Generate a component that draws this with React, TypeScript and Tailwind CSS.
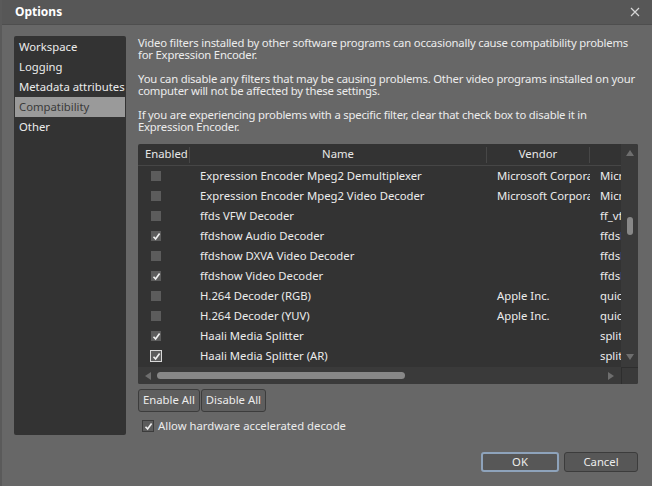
import { useState } from "react";

interface Filter {
  on: boolean;
  name: string;
  vendor: string;
  file: string;
  focus?: boolean;
}

const filters: Filter[] = [
  { on: false, name: "Expression Encoder Mpeg2 Demultiplexer", vendor: "Microsoft Corporation", file: "Microsoft.Expression" },
  { on: false, name: "Expression Encoder Mpeg2 Video Decoder", vendor: "Microsoft Corporation", file: "Microsoft.Expression" },
  { on: false, name: "ffds VFW Decoder", vendor: "", file: "ff_vfw.dll" },
  { on: true, name: "ffdshow Audio Decoder", vendor: "", file: "ffdshow.ax" },
  { on: false, name: "ffdshow DXVA Video Decoder", vendor: "", file: "ffdshow.ax" },
  { on: true, name: "ffdshow Video Decoder", vendor: "", file: "ffdshow.ax" },
  { on: false, name: "H.264 Decoder (RGB)", vendor: "Apple Inc.", file: "quicktime.qts" },
  { on: false, name: "H.264 Decoder (YUV)", vendor: "Apple Inc.", file: "quicktime.qts" },
  { on: true, name: "Haali Media Splitter", vendor: "", file: "splitter.ax" },
  { on: true, name: "Haali Media Splitter (AR)", vendor: "", file: "splitter.ax", focus: true },
];

const sections = ["Workspace", "Logging", "Metadata attributes", "Compatibility", "Other"];

function Check({ on, focus }: { on: boolean; focus?: boolean }) {
  return (
    <span
      className={
        focus
          ? "w-[12px] h-[12px] -ml-[1px] border border-[#d8d8d8] bg-[#5c5c5c] flex items-center justify-center"
          : "w-[10px] h-[10px] bg-[#5c5c5c] flex items-center justify-center"
      }
    >
      {on && (
        <svg width="9" height="9" viewBox="0 0 9 9" className="shrink-0">
          <path d="M1.5 4.8 L3.6 7 L7.6 1.5" fill="none" stroke="#f0f0f0" strokeWidth="1.6" />
        </svg>
      )}
    </span>
  );
}

function Arrow({ dir }: { dir: "up" | "down" | "left" | "right" }) {
  const d = {
    up: "M1 8 L5 2 L9 8 Z",
    down: "M1 2 L5 8 L9 2 Z",
    left: "M8 1 L2 5 L8 9 Z",
    right: "M2 1 L8 5 L2 9 Z",
  }[dir];
  return (
    <svg width="10" height="10" viewBox="0 0 10 10" className="shrink-0">
      <path d={d} fill="#6e6e6e" />
    </svg>
  );
}

export default function App() {
  const [section, setSection] = useState("Compatibility");

  return (
    <div
      className="w-[652px] h-[486px] bg-[#676767] text-[#ececec] text-[11.3px] flex flex-col overflow-hidden border-l-2 border-[#5a5a5a]"
      style={{ fontFamily: '"Noto Sans", "Open Sans", sans-serif' }}
    >
      <div className="h-[25px] shrink-0 bg-[#575757] border-b border-[#4e4e4e] flex items-center justify-between pl-[13px] pr-[12px]">
        <span className="font-bold text-[12px] text-white">Options</span>
        <svg width="10" height="10" viewBox="0 0 10 10">
          <path d="M1 1 L9 9 M9 1 L1 9" stroke="#d6d6d6" strokeWidth="1.2" />
        </svg>
      </div>

      <div className="flex flex-1 min-h-0 pl-[12px] pr-[14px] pt-[11px]">
        <ul className="w-[112px] h-[399px] bg-[#333333] rounded-[2px] pt-[1px] shrink-0">
          {sections.map((s) => (
            <li
              key={s}
              onClick={() => setSection(s)}
              className={
                "h-[20px] flex items-center pl-[4px] mx-[1px] cursor-default whitespace-nowrap " +
                (s === section ? "bg-[#9a9a9a] text-[#3a3a3a]" : "")
              }
            >
              {s}
            </li>
          ))}
        </ul>

        <div className="flex-1 min-w-0 ml-[12px] flex flex-col">
          <div className="leading-[12px] space-y-[12px] pt-[1px] whitespace-nowrap tracking-[-0.2px]">
            <p>
              Video filters installed by other software programs can occasionally cause compatibility problems
              <br />
              for Expression Encoder.
            </p>
            <p>
              You can disable any filters that may be causing problems. Other video programs installed on your
              <br />
              computer will not be affected by these settings.
            </p>
            <p>
              If you are experiencing problems with a specific filter, clear that check box to disable it in
              <br />
              Expression Encoder.
            </p>
          </div>

          <div className="mt-[11px] h-[240px] shrink-0 bg-[#333333] rounded-[2px] flex flex-col overflow-hidden">
            <div className="flex flex-1 min-h-0">
              <div className="flex-1 min-w-0 overflow-hidden">
                <div className="h-[22px] flex items-center border-b border-[#464646] text-[#e8e8e8]">
                  <div className="w-[52px] shrink-0 pl-[7px] h-[16px] flex items-center border-r border-[#474747]">
                    Enabled
                  </div>
                  <div className="w-[297px] shrink-0 h-[16px] flex items-center justify-center border-r border-[#474747]">
                    Name
                  </div>
                  <div className="w-[103px] shrink-0 h-[16px] flex items-center justify-center border-r border-[#474747]">
                    Vendor
                  </div>
                  <div className="flex-1" />
                </div>
                {filters.map((f) => (
                  <div key={f.name} className="h-[20px] flex items-center whitespace-nowrap">
                    <div className="w-[52px] shrink-0 flex items-center pl-[13px]">
                      <Check on={f.on} focus={f.focus} />
                    </div>
                    <div className="w-[297px] shrink-0 pl-[10px] overflow-hidden">{f.name}</div>
                    <div className="w-[103px] shrink-0 pl-[10px] overflow-hidden">{f.vendor}</div>
                    <div className="flex-1 min-w-0 pl-[10px] overflow-hidden">{f.file}</div>
                  </div>
                ))}
              </div>
              <div className="w-[17px] shrink-0 bg-[#3a3a3a] flex flex-col items-center pt-[4px] pb-[5px]">
                <Arrow dir="up" />
                <div className="flex-1 w-full flex flex-col items-center pt-[59px]">
                  <div className="w-[6px] h-[18px] rounded-full bg-[#888888]" />
                </div>
                <Arrow dir="down" />
              </div>
            </div>
            <div className="h-[17px] shrink-0 flex">
              <div className="flex-1 min-w-0 bg-[#3a3a3a] flex items-center pl-[5px] pr-[5px]">
                <Arrow dir="left" />
                <div className="ml-[4px] w-[248px] h-[7px] rounded-full bg-[#888888]" />
                <div className="flex-1" />
                <Arrow dir="right" />
              </div>
              <div className="w-[17px] shrink-0 bg-[#3a3a3a] border-l border-t border-[#2e2e2e]" />
            </div>
          </div>

          <div className="mt-[5px] flex">
            <button className="h-[23px] px-[4px] border border-[#3c3c3c] rounded-[3px] bg-[#5e5e5e] text-[#ececec]">
              Enable All
            </button>
            <button className="h-[23px] px-[4px] border border-[#3c3c3c] rounded-[3px] bg-[#5e5e5e] text-[#ececec] ml-[1px]">
              Disable All
            </button>
          </div>

          <label className="mt-[6px] ml-[4px] flex items-center gap-[4px]">
            <span className="w-[12px] h-[12px] border border-[#3c3c3c] bg-[#5c5c5c] flex items-center justify-center">
              <svg width="9" height="9" viewBox="0 0 9 9">
                <path d="M1.5 4.8 L3.6 7 L7.6 1.5" fill="none" stroke="#f0f0f0" strokeWidth="1.6" />
              </svg>
            </span>
            Allow hardware accelerated decode
          </label>

          <div className="mt-auto mb-[14px] flex justify-end gap-[5px]">
            <button className="w-[78px] h-[20px] border-2 border-[#8ea3bb] rounded-[3px] bg-[#575757] text-[#ececec] leading-none">
              OK
            </button>
            <button className="w-[74px] h-[20px] border border-[#3c3c3c] rounded-[3px] bg-[#575757] text-[#ececec] leading-none">
              Cancel
            </button>
          </div>
        </div>
      </div>
    </div>
  );
}
